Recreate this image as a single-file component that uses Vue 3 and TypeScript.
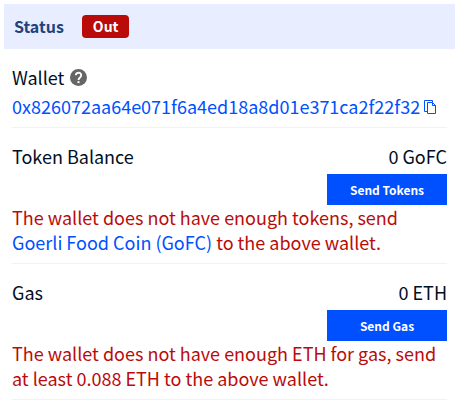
<script setup lang="ts">
interface Funding {
  id: string
  label: string
  amount: string
  action: string
  before: string
  link?: string
  after?: string
}

const address = '0x826072aa64e071f6a4ed18a8d01e371ca2f22f32'

const fundings: Funding[] = [
  {
    id: 'tokens',
    label: 'Token Balance',
    amount: '0 GoFC',
    action: 'Send Tokens',
    before: 'The wallet does not have enough tokens, send ',
    link: 'Goerli Food Coin (GoFC)',
    after: ' to the above wallet.',
  },
  {
    id: 'gas',
    label: 'Gas',
    amount: '0 ETH',
    action: 'Send Gas',
    before: 'The wallet does not have enough ETH for gas, send at least 0.088 ETH to the above wallet.',
  },
]

function copyAddress(): void {
  navigator.clipboard?.writeText(address)
}
</script>

<template>
  <main class="panel">
    <header class="status">
      <h2 class="status-title">Status</h2>
      <span class="badge">Out</span>
    </header>
    <div class="rows">
      <section class="row wallet">
        <div class="label">
          <span>Wallet</span>
          <button class="icon-button" type="button" aria-label="About the wallet">
            <svg width="17" height="17" viewBox="1 1 22 22">
              <circle cx="12" cy="12" r="11" fill="#666" />
              <path d="M8.500 9.200a3.500 3.300 0 1 1 5.700 2.500C12.800 12.800 12 13.300 12 15.200" fill="none" stroke="#fff" stroke-width="2.400" />
              <path d="M10.700 16.700h2.600v2.600h-2.600z" fill="#fff" />
            </svg>
          </button>
        </div>
        <div class="address">
          <a href="#wallet">{{ address }}</a>
          <button class="icon-button" type="button" aria-label="Copy address" @click="copyAddress">
            <svg width="12" height="14" viewBox="0 0 12 14" fill="none" stroke="#0050ff">
              <path d="M3 11.500H.5V.5h8V2" />
              <path d="M3.500 2.500h5l3 3v8h-8zM8.500 2.500v3h3" />
            </svg>
          </button>
        </div>
      </section>
      <section v-for="item in fundings" :key="item.id" class="row">
        <div class="summary">
          <span>{{ item.label }}</span>
          <span>{{ item.amount }}</span>
        </div>
        <button class="send" type="button">{{ item.action }}</button>
        <p class="message">{{ item.before }}<a v-if="item.link" href="#token">{{ item.link }}</a>{{ item.after }}</p>
      </section>
    </div>
  </main>
</template>

<style>
body {
  margin: 0;
  background: #fff;
}
</style>

<style scoped>
.panel {
  padding: 4px 4px 0;
  color: #000f24;
  font-family: "Noto Sans CJK SC", "Noto Sans", sans-serif;
  font-size: 18px;
  line-height: 25px;
}

.status {
  display: flex;
  align-items: center;
  gap: 18px;
  height: 45px;
  padding: 0 10px;
  background: #e8eeff;
}

.status-title {
  margin: 0;
  color: #20437c;
  font-size: 16px;
  font-weight: 700;
}

.badge {
  padding: 0 11px;
  border-radius: 4px;
  background: #b90c0a;
  color: #fff;
  font-size: 14px;
  font-weight: 700;
  line-height: 23px;
}

.rows {
  padding: 0 8px;
}

.row {
  display: flex;
  flex-direction: column;
  padding: 16px 0 8px;
  border-bottom: 1px solid #f2f2f2;
}

.wallet {
  gap: 4px;
}

.label,
.address {
  display: flex;
  align-items: center;
  gap: 4px;
}

.label {
  gap: 6px;
}

.summary {
  display: flex;
  justify-content: space-between;
}

a {
  color: #0050ff;
  text-decoration: none;
}

.icon-button {
  display: flex;
  padding: 0;
  border: 0;
  background: none;
  cursor: pointer;
}

.send {
  align-self: flex-end;
  width: 120px;
  height: 31px;
  margin-top: 5px;
  padding: 0;
  border: 0;
  background: #0050ff;
  color: #fff;
  font-family: inherit;
  font-size: 12px;
  font-weight: 700;
  cursor: pointer;
}

.message {
  margin: 0;
  color: #b90c0a;
}
</style>
